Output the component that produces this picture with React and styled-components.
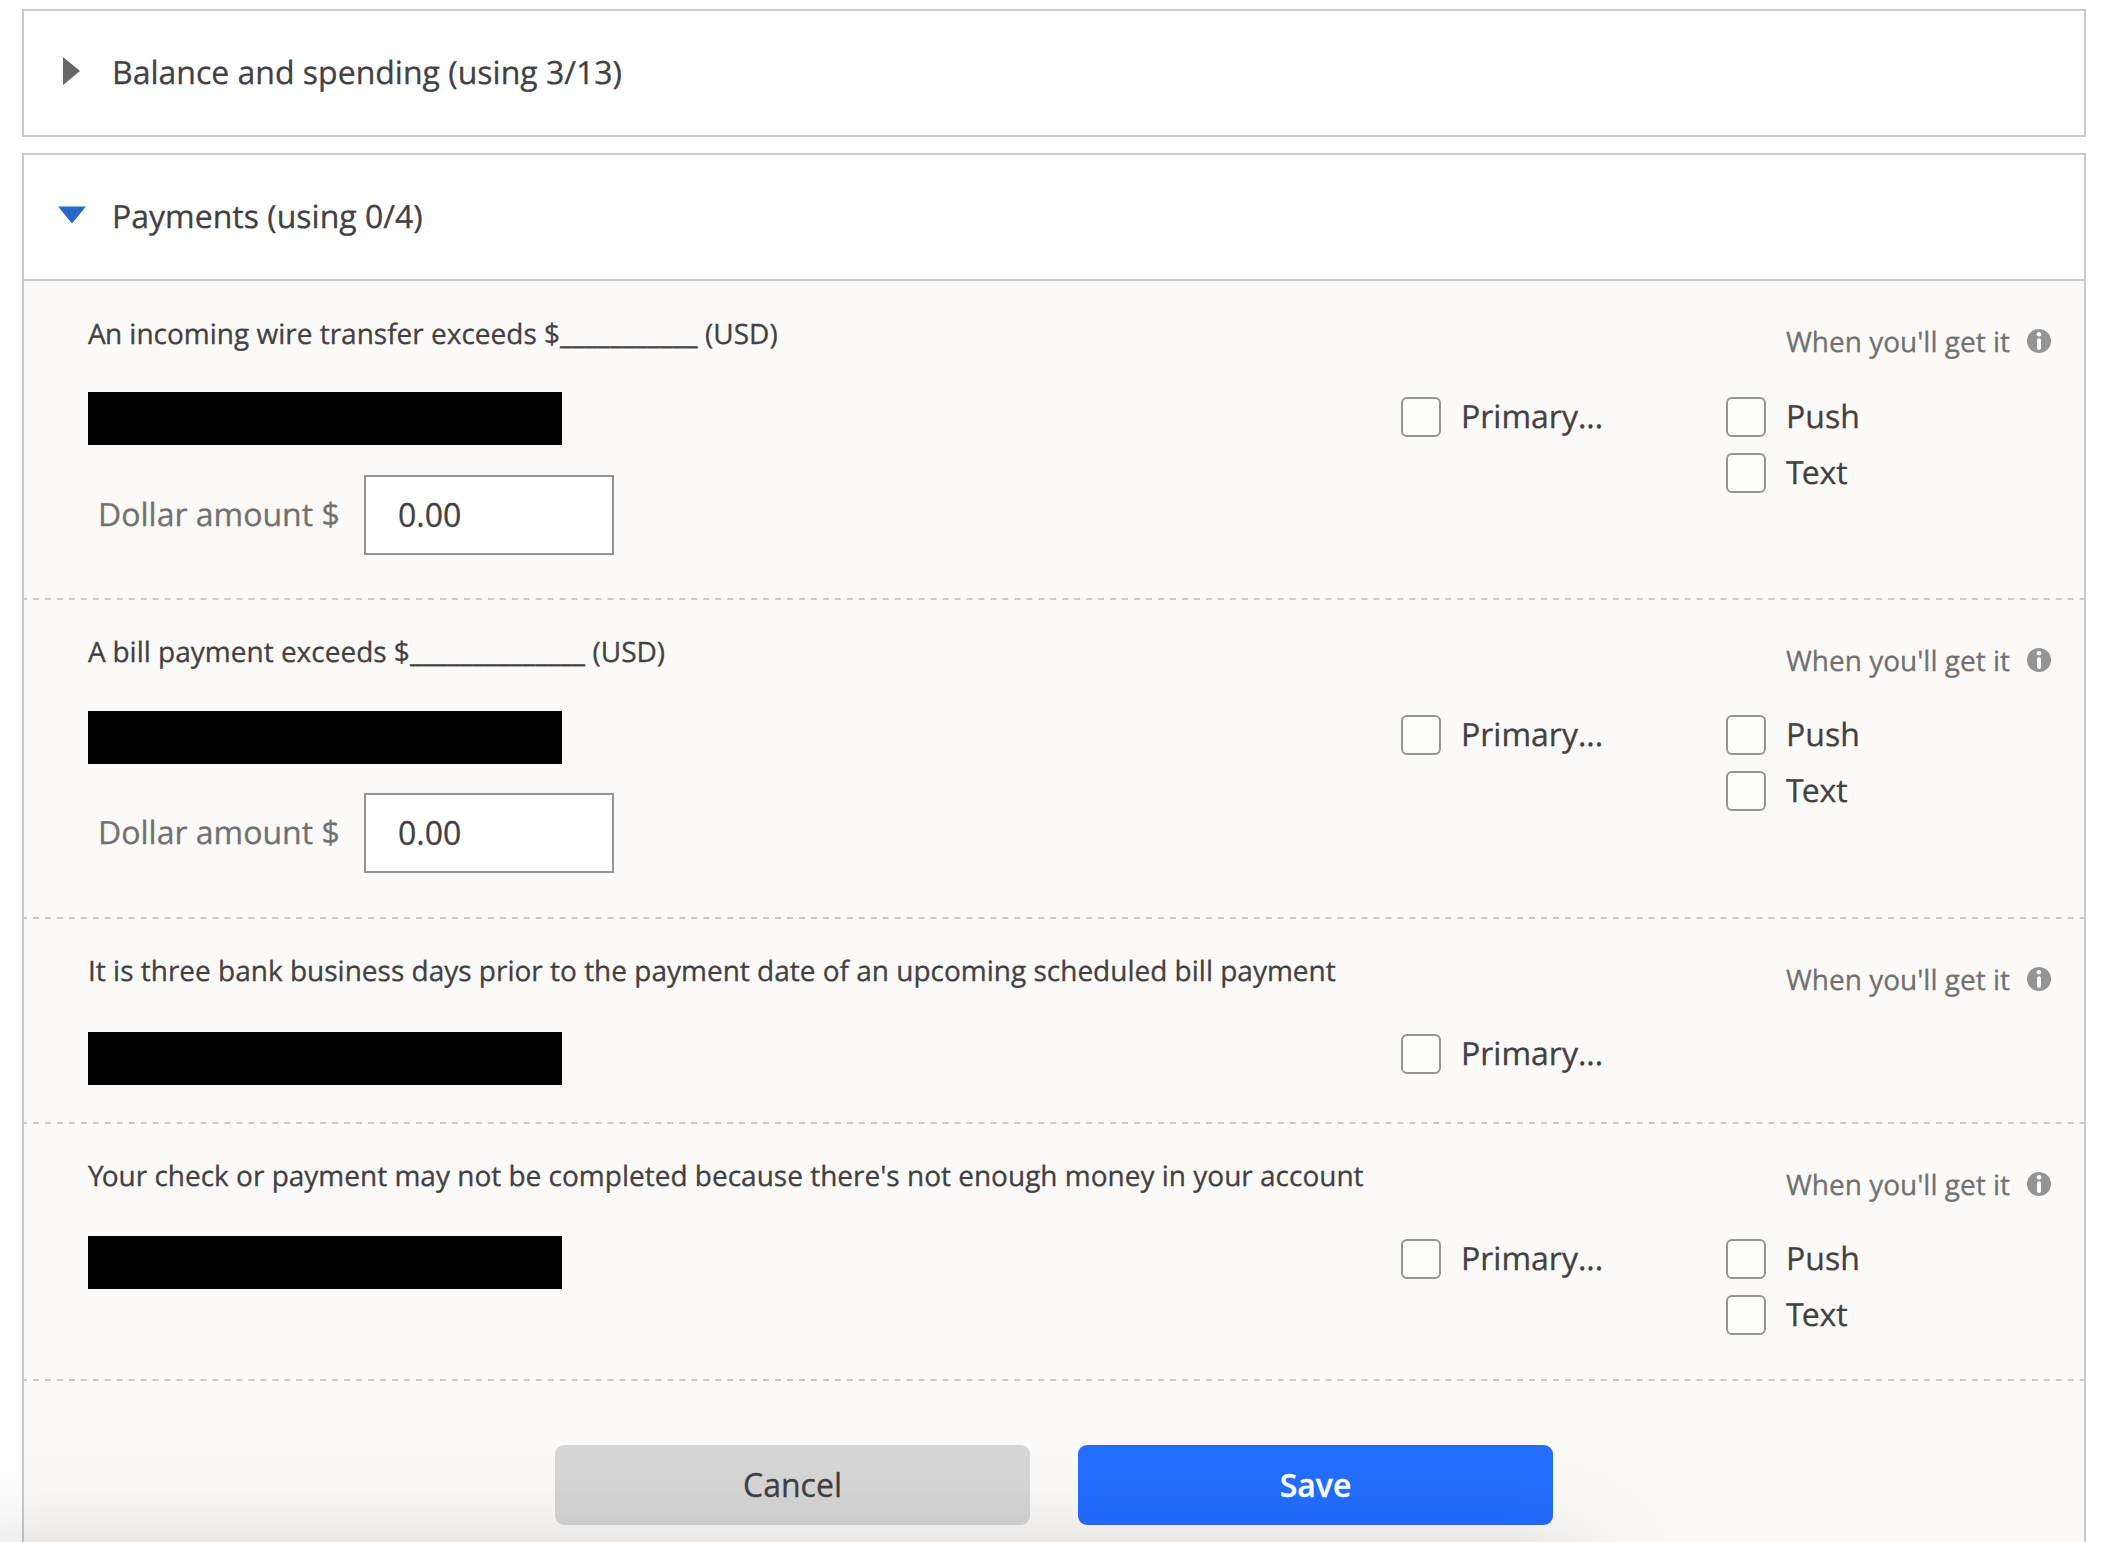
import React from 'react';
import styled, { createGlobalStyle } from 'styled-components';

const GlobalStyle = createGlobalStyle`
  *, *::before, *::after { box-sizing: border-box; }
  html, body { margin: 0; background: #fff; overflow: hidden; }
  body {
    height: 1542px;
    font-family: "Open Sans", "Noto Sans", sans-serif;
    font-kerning: normal;
    text-rendering: geometricPrecision;
    -webkit-text-stroke: 0.3px;
    color: #414042;
  }
`;

const Page = styled.main`
  display: flex;
  flex-direction: column;
  gap: 16px;
  width: 2102px;
  height: 1542px;
  padding: 9px 16px 0 22px;
  overflow: hidden;
`;

const Panel = styled.section`
  flex: none;
  border: 2px solid #cacaca;
  background: #fff;
`;

const PanelHeader = styled.h2`
  display: flex;
  align-items: center;
  height: ${(p) => (p.$open ? '126px' : '124px')};
  margin: 0;
  padding: 0 34px;
  border-bottom: ${(p) => (p.$open ? '2px solid #cacaca' : '0')};
  font-size: 32px;
  font-weight: 400;
  line-height: 44px;
`;

const ArrowSlot = styled.span`
  display: flex;
  justify-content: center;
  width: 28px;
  margin-right: 26px;
  padding-bottom: 4px;
`;

const Rows = styled.div`
  background: #fbfaf8;
`;

const AlertRow = styled.article`
  display: flex;
  height: ${(p) => p.$height}px;
  padding-top: ${(p) => p.$top}px;
  padding-left: 64px;
  background: linear-gradient(to right, #cacaca 6px, transparent 6px) -3px 100% / 11.977px 2px repeat-x;
`;

const Details = styled.div`
  width: 1313px;
  padding-top: 33px;
`;

const AlertTitle = styled.h3`
  margin: 0;
  font-size: 28px;
  font-weight: 400;
  line-height: 38px;
  white-space: nowrap;

  &::first-letter { letter-spacing: ${(p) => p.$kern}px; }
`;

const Blank = styled.span`
  letter-spacing: 0.26px;
`;

const Redacted = styled.div`
  width: 474px;
  height: 53px;
  margin-top: ${(p) => p.$gap}px;
  background: #000;
`;

const AmountRow = styled.label`
  display: flex;
  align-items: center;
  margin-top: ${(p) => p.$gap}px;
  padding-left: 10px;
  font-size: 32px;
  color: #717171;
`;

const AmountLabel = styled.span`
  width: 266px;
  padding-bottom: 2px;
  white-space: nowrap;
`;

const AmountInput = styled.input`
  width: 250px;
  height: 80px;
  padding: 0 32px 2px;
  border: 2px solid #949494;
  border-radius: 0;
  outline: 0;
  background: #fff;
  color: #414042;
  font: inherit;
`;

const Delivery = styled.div`
  flex: 1;
`;

const Timing = styled.div`
  display: flex;
  align-items: center;
  justify-content: flex-end;
  gap: 17px;
  height: 38px;
  margin-top: ${(p) => p.$top}px;
  padding-right: 33px;
  font-size: 28px;
  line-height: 38px;
  color: #717171;

  svg { margin-bottom: 2px; }
`;

const Options = styled.div`
  display: grid;
  grid-template-columns: 325px 1fr;
  margin-top: ${(p) => p.$gap}px;
`;

const OptionColumn = styled.div`
  display: flex;
  flex-direction: column;
  gap: 16px;
`;

const Option = styled.label`
  display: flex;
  align-items: center;
  gap: 20px;
  height: 40px;
  font-size: 32px;
  line-height: 40px;
`;

const OptionText = styled.span`
  display: block;

  &::first-letter { letter-spacing: ${(p) => p.$kern}px; }
`;

const Checkbox = styled.input`
  appearance: none;
  width: 40px;
  height: 40px;
  margin: 0;
  border: 2px solid #949494;
  border-radius: 6px;
  background: #fdfdfc;
`;

const Actions = styled.footer`
  display: flex;
  gap: 48px;
  height: 200px;
  padding: 64px 0 0 531px;
`;

const Button = styled.button`
  width: 475px;
  height: 80px;
  padding: 0 0 2px;
  border: 0;
  border-radius: 9px;
  background: ${(p) => (p.$primary ? '#236eff' : '#d6d6d6')};
  color: ${(p) => (p.$primary ? '#fff' : '#414042')};
  font: ${(p) => (p.$primary ? 600 : 400)} 32px "Open Sans", "Noto Sans", sans-serif;
`;

/* Shadow cast upward by a bar docked just past the bottom edge. */
const DockShadow = styled.div`
  position: fixed;
  left: -60px;
  top: 1556px;
  width: 1645px;
  height: 200px;
  border-radius: 10px;
  box-shadow: 0 0 100px rgba(0, 0, 0, 0.18);
  pointer-events: none;
`;

function Arrow({ open }) {
  return (
    <ArrowSlot>
      {open ? (
        <svg width="28" height="28" viewBox="0 0 28 28">
          <path d="M0 5.5H28L14 22.5Z" fill="#2669c8" />
        </svg>
      ) : (
        <svg width="28" height="28" viewBox="0 0 28 28">
          <path d="M5 0L22 14L5 28Z" fill="#666" />
        </svg>
      )}
    </ArrowSlot>
  );
}

function InfoIcon() {
  return (
    <svg width="24" height="24" viewBox="0 0 24 24">
      <circle cx="12" cy="12" r="12" fill="#949494" />
      <circle cx="12" cy="5.3" r="2.3" fill="#fff" />
      <rect x="10" y="9.3" width="4" height="11.7" rx="2" fill="#fff" />
    </svg>
  );
}

const alerts = [
  { title: 'An incoming wire transfer exceeds $', blank: 11, kern: -0.8, height: 319, top: 1, bar: 39, amount: 30, mobile: true },
  { title: 'A bill payment exceeds $', blank: 14, kern: -0.5, height: 319, top: 0, bar: 40, amount: 29, mobile: true },
  { title: 'It is three bank business days prior to the payment date of an upcoming scheduled bill payment', kern: 0, height: 205, top: 0, bar: 42, mobile: false },
  { title: "Your check or payment may not be completed because there's not enough money in your account", kern: -2, height: 257, top: 0, bar: 41, mobile: true },
];

function CheckOption({ label, kern = 0 }) {
  return (
    <Option>
      <Checkbox type="checkbox" />
      <OptionText $kern={kern}>{label}</OptionText>
    </Option>
  );
}

function Alert({ alert }) {
  return (
    <AlertRow $height={alert.height} $top={alert.top}>
      <Details>
        <AlertTitle $kern={alert.kern}>
          {alert.title}
          {alert.blank && (
            <>
              <Blank>{'_'.repeat(alert.blank)}</Blank>
              {' (USD)'}
            </>
          )}
        </AlertTitle>
        <Redacted $gap={alert.bar} />
        {alert.amount && (
          <AmountRow $gap={alert.amount}>
            <AmountLabel>Dollar amount $</AmountLabel>
            <AmountInput defaultValue="0.00" />
          </AmountRow>
        )}
      </Details>
      <Delivery>
        <Timing $top={42 - alert.top}>
          When you'll get it
          <InfoIcon />
        </Timing>
        <Options $gap={35 + alert.top}>
          <OptionColumn>
            <CheckOption label="Primary..." />
          </OptionColumn>
          {alert.mobile && (
            <OptionColumn>
              <CheckOption label="Push" />
              <CheckOption label="Text" kern={-2} />
            </OptionColumn>
          )}
        </Options>
      </Delivery>
    </AlertRow>
  );
}

export default function App() {
  return (
    <>
      <GlobalStyle />
      <Page>
        <Panel>
          <PanelHeader>
            <Arrow />
            Balance and spending (using 3/13)
          </PanelHeader>
        </Panel>
        <Panel>
          <PanelHeader $open>
            <Arrow open />
            Payments (using 0/4)
          </PanelHeader>
          <Rows>
            {alerts.map((a) => (
              <Alert key={a.title} alert={a} />
            ))}
            <Actions>
              <Button>Cancel</Button>
              <Button $primary>Save</Button>
            </Actions>
          </Rows>
        </Panel>
      </Page>
      <DockShadow />
    </>
  );
}
